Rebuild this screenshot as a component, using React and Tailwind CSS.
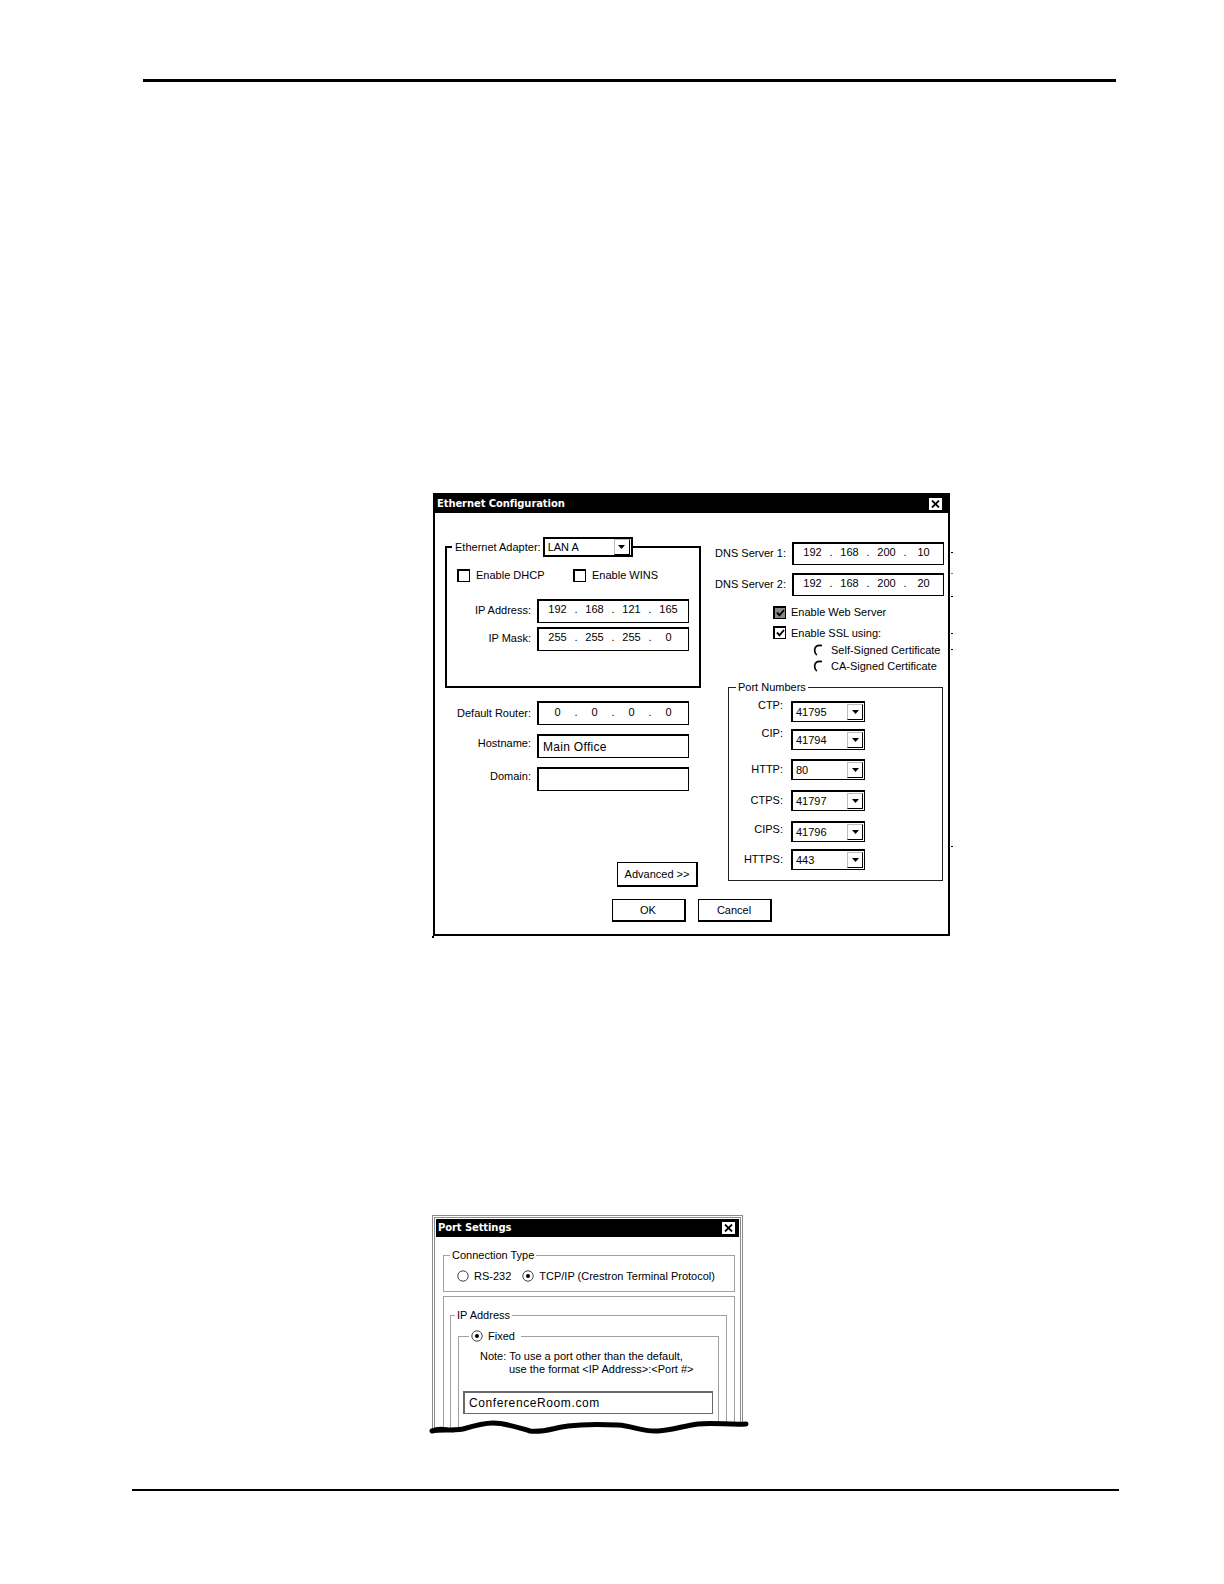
import React, { Fragment } from "react";

const SANS = "font-['Liberation_Sans',Arial,sans-serif]";
const TITLE = "font-['DejaVu_Sans',Verdana,sans-serif]";

function CloseBtn() {
  return (
    <span className="w-[13px] h-[12px] bg-white flex items-center justify-center">
      <svg width="9" height="8" viewBox="0 0 9 8">
        <path d="M1 0.5 L8 7.5 M8 0.5 L1 7.5" stroke="black" strokeWidth="1.8" />
      </svg>
    </span>
  );
}

function TitleBar({ title, pr }) {
  return (
    <div className={`h-[18px] bg-black flex items-center justify-between pl-[2px] ${pr}`}>
      <span className={`${TITLE} text-[10px] font-bold text-white leading-none tracking-[-0.1px]`}>{title}</span>
      <CloseBtn />
    </div>
  );
}

function Check({ checked, gray }) {
  return (
    <span
      className={`w-[13px] h-[13px] shrink-0 border-t-2 border-l-2 border-r border-b border-black flex items-center justify-center ${
        gray ? "bg-[#8a8a8a]" : "bg-white"
      }`}
    >
      {checked && (
        <svg width="9" height="8" viewBox="0 0 9 8">
          <path d="M1 3.5 L3.5 6.3 L8 1" stroke="black" strokeWidth="1.9" fill="none" />
        </svg>
      )}
    </span>
  );
}

function PartRadio() {
  return (
    <svg width="10" height="12" viewBox="0 0 10 12" className="shrink-0">
      <path d="M9 1.6 Q2.2 0.4 1.6 6 Q1.6 9.4 3.8 11" stroke="black" strokeWidth="1.7" fill="none" />
    </svg>
  );
}

function Radio({ on }) {
  return (
    <svg width="12" height="12" viewBox="0 0 12 12" className="shrink-0">
      <circle cx="6" cy="6" r="5.2" fill="white" stroke="#444" strokeWidth="1" />
      {on && <circle cx="6" cy="6" r="2" fill="black" />}
    </svg>
  );
}

function DropBtn() {
  return (
    <span className="w-[16px] h-[16px] mr-px shrink-0 border border-black border-t-[#bdbdbd] border-l-[#bdbdbd] bg-white flex items-center justify-center">
      <svg width="7" height="4" viewBox="0 0 7 4">
        <path d="M0 0 H7 L3.5 4 Z" fill="black" />
      </svg>
    </span>
  );
}

function IpField({ values, h = "h-[24px]" }) {
  return (
    <div
      className={`w-[152px] ${h} shrink-0 border-t-2 border-l-2 border-r border-b border-black bg-white flex items-center pl-[3px] text-[11px] leading-none pb-[3px]`}
    >
      {values.map((v, i) => (
        <Fragment key={i}>
          <span className="w-[31px] text-center">{v}</span>
          {i < 3 && <span className="w-[6px] text-center">.</span>}
        </Fragment>
      ))}
    </div>
  );
}

function TextField({ value }) {
  return (
    <div className="w-[152px] h-[24px] shrink-0 border-t-2 border-l-2 border-r border-b border-black bg-white flex items-center pl-[4px] text-[12px] tracking-[0.3px] leading-none">
      {value}
    </div>
  );
}

function Combo({ value }) {
  return (
    <div className="w-[74px] h-[21px] shrink-0 border-t-2 border-l-2 border-r border-b border-black bg-white flex items-center">
      <span className="flex-1 pl-[3px] text-[11px] leading-none">{value}</span>
      <DropBtn />
    </div>
  );
}

function Btn({ children, w, h }) {
  return (
    <div
      className={`${w} ${h} border border-black border-b-2 border-r-2 bg-white flex items-center justify-center text-[11px] leading-none`}
    >
      {children}
    </div>
  );
}

function PortRow({ label, value, mt, labelCls = "" }) {
  return (
    <div className={`flex items-center ${mt}`}>
      <span className={`w-[47px] text-right leading-[13px] ${labelCls}`}>{label}</span>
      <span className="ml-[8px]">
        <Combo value={value} />
      </span>
    </div>
  );
}

function EthernetDialog() {
  return (
    <div className="relative ml-[433px] mt-[411px] w-[517px] h-[443px] border-2 border-black bg-white flex flex-col text-[11px] text-black">
      <TitleBar title="Ethernet Configuration" pr="pr-[6px]" />
      <div className="flex">
        {/* left column */}
        <div className="ml-[10px] w-[256px] flex flex-col">
          <fieldset className="mt-[24px] h-[151px] border-2 border-black pl-[5px] min-w-0">
            <legend className="p-0">
              <span className="flex items-center h-[20px]">
                <span className="pl-[3px]">Ethernet Adapter:</span>
                <span className="ml-[2px] w-[90px] h-[20px] border-2 border-black bg-white flex items-center">
                  <span className="flex-1 pl-[3px] leading-none">LAN A</span>
                  <DropBtn />
                </span>
              </span>
            </legend>
            <div className="mt-[10px] ml-[5px] flex items-center">
              <span className="w-[116px] flex items-center">
                <Check />
                <span className="ml-[6px]">Enable DHCP</span>
              </span>
              <Check />
              <span className="ml-[6px]">Enable WINS</span>
            </div>
            <div className="mt-[15px] flex items-center">
              <span className="w-[79px] text-right">IP Address:</span>
              <span className="ml-[6px]">
                <IpField values={["192", "168", "121", "165"]} />
              </span>
            </div>
            <div className="mt-[4px] flex items-center">
              <span className="w-[79px] text-right">IP Mask:</span>
              <span className="ml-[6px]">
                <IpField values={["255", "255", "255", "0"]} />
              </span>
            </div>
          </fieldset>
          <div className="mt-[13px] flex items-center">
            <span className="w-[86px] text-right">Default Router:</span>
            <span className="ml-[6px]">
              <IpField values={["0", "0", "0", "0"]} />
            </span>
          </div>
          <div className="mt-[9px] flex items-center">
            <span className="w-[86px] text-right -mt-[6px]">Hostname:</span>
            <span className="ml-[6px]">
              <TextField value="Main Office" />
            </span>
          </div>
          <div className="mt-[9px] flex items-center">
            <span className="w-[86px] text-right -mt-[6px]">Domain:</span>
            <span className="ml-[6px]">
              <TextField value="" />
            </span>
          </div>
          <div className="mt-[71px] flex justify-end mr-[3px]">
            <Btn w="w-[81px]" h="h-[25px]">Advanced &gt;&gt;</Btn>
          </div>
        </div>
        {/* right column */}
        <div className="ml-[5px] w-[238px] flex flex-col">
          <div className="mt-[29px] flex items-center justify-end">
            <span>DNS Server 1:</span>
            <span className="ml-[6px]">
              <IpField values={["192", "168", "200", "10"]} h="h-[23px]" />
            </span>
          </div>
          <div className="mt-[8px] flex items-center justify-end">
            <span>DNS Server 2:</span>
            <span className="ml-[6px]">
              <IpField values={["192", "168", "200", "20"]} h="h-[23px]" />
            </span>
          </div>
          <div className="mt-[8px] pl-[67px] flex items-center">
            <Check checked gray />
            <span className="ml-[5px]">Enable Web Server</span>
          </div>
          <div className="mt-[4px] pl-[67px] flex items-center">
            <Check checked />
            <span className="ml-[5px]">Enable SSL using:</span>
          </div>
          <div className="mt-[3px] pl-[107px] flex items-center h-[12px]">
            <PartRadio />
            <span className="ml-[8px]">Self-Signed Certificate</span>
          </div>
          <div className="mt-[4px] pl-[107px] flex items-center h-[12px]">
            <PartRadio />
            <span className="ml-[8px]">CA-Signed Certificate</span>
          </div>
          <fieldset className="mt-[8px] ml-[22px] w-[215px] h-[201px] border border-[#222] pl-[7px] min-w-0">
            <legend className="px-[2px] leading-[14px]">Port Numbers</legend>
            <PortRow label="CTP:" value="41795" mt="mt-[7px]" labelCls="self-start -mt-[2px]" />
            <PortRow label="CIP:" value="41794" mt="mt-[7px]" labelCls="self-start -mt-[2px]" />
            <PortRow label="HTTP:" value="80" mt="mt-[9px]" />
            <PortRow label="CTPS:" value="41797" mt="mt-[10px]" />
            <PortRow label="CIPS:" value="41796" mt="mt-[10px]" labelCls="-mt-[4px]" />
            <PortRow label="HTTPS:" value="443" mt="mt-[7px]" />
          </fieldset>
        </div>
      </div>
      <div className="mt-[12px] flex justify-center gap-[12px]">
        <Btn w="w-[74px]" h="h-[23px]">OK</Btn>
        <Btn w="w-[74px]" h="h-[23px]">Cancel</Btn>
      </div>
      {/* scan tick marks outside the right edge */}
      <span className="absolute left-[516px] top-[57px] w-[2px] h-[1px] bg-black" />
      <span className="absolute left-[516px] top-[78px] w-[2px] h-[1px] bg-[#777]" />
      <span className="absolute left-[516px] top-[101px] w-[2px] h-[1px] bg-black" />
      <span className="absolute left-[516px] top-[138px] w-[2px] h-[1px] bg-black" />
      <span className="absolute left-[516px] top-[154px] w-[2px] h-[1px] bg-black" />
      <span className="absolute left-[516px] top-[351px] w-[2px] h-[1px] bg-black" />
      <span className="absolute left-[-3px] top-[441px] w-[2px] h-[2px] bg-black" />
    </div>
  );
}

function PortSettingsDialog() {
  return (
    <div className="relative ml-[432px] mt-[279px] w-[311px] h-[222px] border-x border-t border-[#8a8a8a] p-px pb-0 bg-white text-[11px] text-black">
      <div className="h-full border-x border-t border-[#8a8a8a] px-px pt-px flex flex-col">
        <TitleBar title="Port Settings" pr="pr-[4px]" />
        <fieldset className="mt-[11px] ml-[7px] mr-[4px] border border-[#a0a0a0] pl-[6px] pb-[9px] min-w-0">
          <legend className="px-[2px] leading-[14px]">Connection Type</legend>
          <div className="mt-[8px] ml-[7px] flex items-center h-[12px]">
            <Radio />
            <span className="ml-[5px]">RS-232</span>
            <span className="ml-[11px]">
              <Radio on />
            </span>
            <span className="ml-[5px]">TCP/IP (Crestron Terminal Protocol)</span>
          </div>
        </fieldset>
        <div className="mt-[4px] ml-[7px] mr-[4px] flex-1 border-x border-t border-[#a0a0a0] pt-[11px] pl-[6px] pr-[7px] flex flex-col">
          <fieldset className="flex-1 border-x border-t border-[#a0a0a0] pl-[4px] min-w-0 flex flex-col">
            <legend className="px-[2px] leading-[14px]">IP Address</legend>
            <fieldset className="mt-[7px] ml-[3px] mr-[7px] flex-1 border-x border-t border-[#a0a0a0] pl-[10px] min-w-0">
              <legend className="px-[2px] h-[14px]">
                <span className="flex items-center h-[14px]">
                  <Radio on />
                  <span className="ml-[5px] pr-[4px]">Fixed</span>
                </span>
              </legend>
              <div className="-ml-[10px] mt-[7px] leading-[13px]">
                <div className="pl-[21px]">Note: To use a port other than the default,</div>
                <div className="pl-[50px]">use the format &lt;IP Address&gt;:&lt;Port #&gt;</div>
              </div>
              <div className="-ml-[6px] mt-[15px] w-[250px] h-[23px] border border-[#6a6a6a] border-t-2 border-l-2 bg-white flex items-center pl-[4px] text-[12px] tracking-[0.6px] leading-none">
                ConferenceRoom.com
              </div>
            </fieldset>
          </fieldset>
        </div>
      </div>
      {/* torn paper edge */}
      <svg
        className="absolute left-[-5px] top-[194px]"
        width="322"
        height="42"
        viewBox="0 0 322 42"
      >
        <path
          d="M0 20 L3 20 C12 19 22 21 35 19 C45 16 55 13 65 13 C78 13 88 17 102 21 C115 23 125 18 140 16 C155 14 170 14 190 15 C205 16 215 22 230 21 C245 20 255 16 270 14 C285 12 300 15 322 14 L322 42 L0 42 Z"
          fill="white"
        />
        <path
          d="M4 21 C12 19 22 21 35 19 C45 16 55 13 65 13 C78 13 88 17 102 21 C115 23 125 18 140 16 C155 14 170 14 190 15 C205 16 215 22 230 21 C245 20 255 16 270 14 C285 12 300 15 318 14"
          fill="none"
          stroke="black"
          strokeWidth="5"
          strokeLinecap="round"
        />
        <path d="M4 20 C10 17 18 18 26 21" fill="none" stroke="black" strokeWidth="3" />
      </svg>
    </div>
  );
}

export default function App() {
  return (
    <div className={`w-[1224px] h-[1584px] bg-white overflow-hidden ${SANS}`}>
      <div className="pt-[79px]">
        <div className="ml-[143px] w-[973px] h-[3px] bg-black" />
      </div>
      <EthernetDialog />
      <PortSettingsDialog />
      <div className="mt-[52px] ml-[132px] w-[987px] h-[2px] bg-black" />
    </div>
  );
}
